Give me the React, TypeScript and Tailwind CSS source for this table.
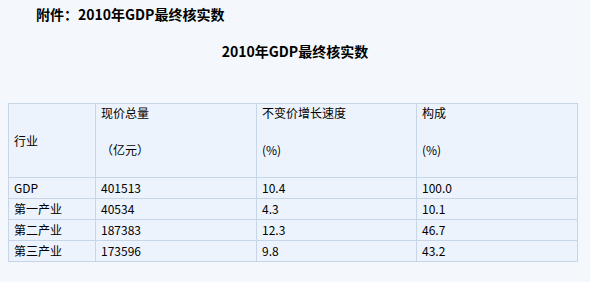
import React from "react";

const rows = [
  ["GDP", "401513", "10.4", "100.0"],
  ["第一产业", "40534", "4.3", "10.1"],
  ["第二产业", "187383", "12.3", "46.7"],
  ["第三产业", "173596", "9.8", "43.2"],
];

export default function App() {
  const font = { fontFamily: '"Noto Sans CJK SC", "Liberation Sans", sans-serif' };
  return (
    <div className="min-h-screen w-full bg-[#f4f8fd] pt-[6px] text-black" style={font}>
      <div className="pl-[36px] text-[14px] font-bold leading-[16px]">附件：2010年GDP最终核实数</div>
      <div className="mt-[21px] text-center text-[14px] font-bold leading-[16px]">2010年GDP最终核实数</div>
      <table className="ml-[8px] mt-[44px] w-[569px] table-fixed border-collapse bg-[#edf3fc] text-[12px] leading-[14px]">
        <colgroup>
          <col className="w-[87px]" />
          <col className="w-[161px]" />
          <col className="w-[160px]" />
          <col className="w-[161px]" />
        </colgroup>
        <tbody>
          <tr className="h-[74px]">
            <td className="border border-[#c6d6e6] px-[5px] align-middle">行业</td>
            {[
              ["现价总量", "（亿元）"],
              ["不变价增长速度", "(%)"],
              ["构成", "(%)"],
            ].map(([a, b]) => (
              <td key={a} className="border border-[#c6d6e6] px-[5px] align-top">
                <div className="leading-[18px]">{a}</div>
                <div className="mt-[19px] leading-[18px]">{b}</div>
              </td>
            ))}
          </tr>
          {rows.map((r) => (
            <tr key={r[0]} className="h-[21px]">
              {r.map((c, i) => (
                <td key={i} className="border border-[#c6d6e6] px-[5px] align-middle">
                  {c}
                </td>
              ))}
            </tr>
          ))}
        </tbody>
      </table>
    </div>
  );
}
